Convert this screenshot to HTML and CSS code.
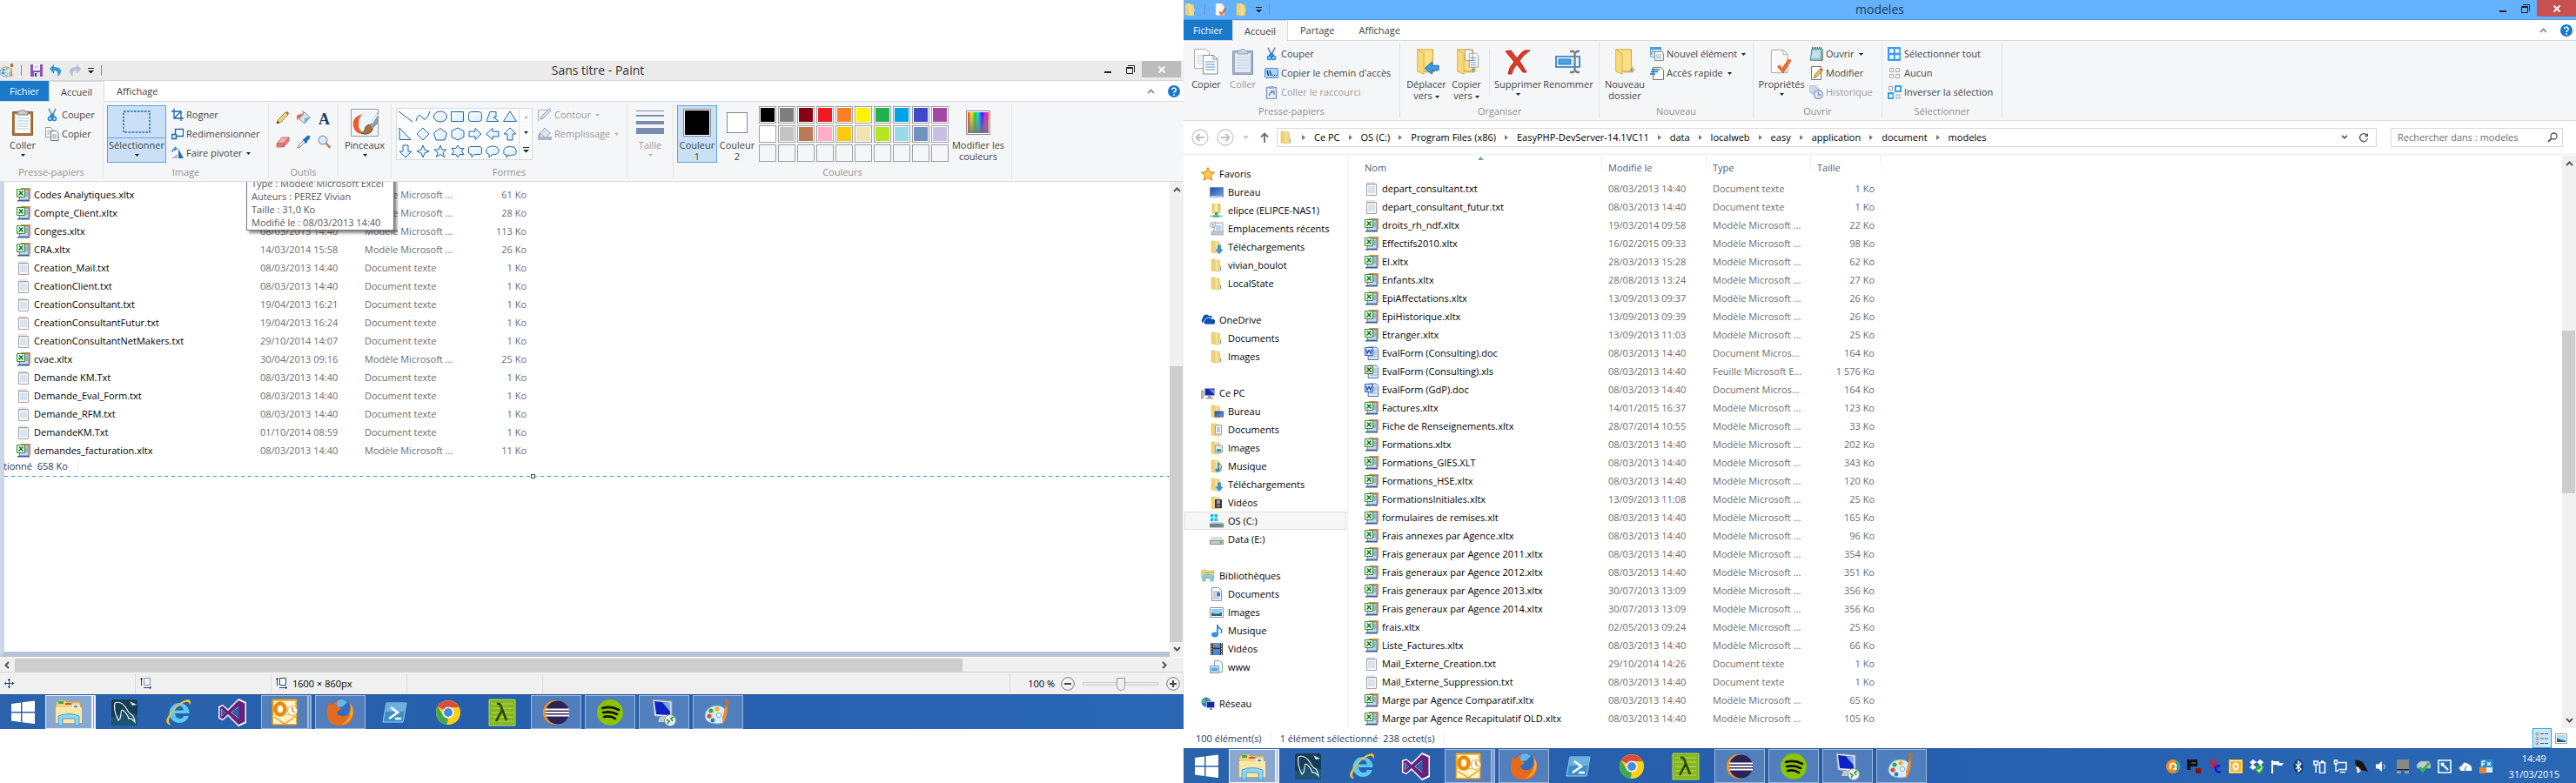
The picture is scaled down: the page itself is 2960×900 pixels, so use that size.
FILE: index.html
```html
<!DOCTYPE html>
<html lang="fr">
<head>
<meta charset="utf-8">
<title>Bureau étendu</title>
<link rel="stylesheet" href="styles.css">
<script src="app.js" defer></script>
</head>
<body>
<svg class="sprite" aria-hidden="true">
<defs>
<linearGradient id="gFold" x1="0" x2="1" y1="0" y2="0"><stop offset="0" stop-color="#e6c75c"/><stop offset=".5" stop-color="#fbeeb0"/><stop offset="1" stop-color="#e3bf4d"/></linearGradient>
<linearGradient id="gSky" x1="0" x2="1" y1="0" y2="1"><stop offset="0" stop-color="#1b4fa8"/><stop offset="1" stop-color="#6fa6e6"/></linearGradient>
<linearGradient id="gHue" x1="0" x2="1"><stop offset="0" stop-color="#f22"/><stop offset=".17" stop-color="#fe2"/><stop offset=".35" stop-color="#1d2"/><stop offset=".5" stop-color="#1df"/><stop offset=".68" stop-color="#22f"/><stop offset=".85" stop-color="#e2e"/><stop offset="1" stop-color="#f22"/></linearGradient>
<linearGradient id="gGray" x1="0" x2="0" y1="0" y2="1"><stop offset="0" stop-color="#888" stop-opacity="0"/><stop offset="1" stop-color="#777" stop-opacity=".9"/></linearGradient>
<linearGradient id="gShape" x1="0" x2="1" y1="0" y2="1"><stop offset="0" stop-color="#fff"/><stop offset="1" stop-color="#d9e9f8"/></linearGradient>
<symbol id="folder" viewBox="0 0 16 16"><path d="M2 1h5l1 1h3l1 10-1 3H7L2 14z" fill="url(#gFold)" stroke="#dcb84a" stroke-width=".6"/><path d="M2 1l5 2v12L2 14z" fill="#ecd27a"/><path d="M11 2l2 8-1 5H9" fill="#f0d675"/><path d="M12.500 10v4" stroke="#5aa7e8"/></symbol>
<symbol id="bigfolder" viewBox="0 0 32 34"><path d="M24 22l6 5-6 4H14z" fill="#bbb" opacity=".5"/><path d="M5 2h19v20l2 3v4H11z" fill="#efcb55" stroke="#d0a638"/><path d="M8 3h15v24H11z" fill="#fbe08b"/><path d="M5 2l8 5v25l-8-3z" fill="#f6d978" stroke="#d9b34a"/><path d="M24 25v4" stroke="#4b9be0" stroke-width="2"/></symbol>
<symbol id="xl" viewBox="0 0 16 16"><path d="M5 0h11v13H5z" fill="#e98b2a"/><path d="M5 2h9v12H3z" fill="#c9d8ee" stroke="#5c7aa8"/><path d="M14.500 2v12" stroke="#7f9cc9"/><path d="M9 5h4M9 7h4M9 9h4" stroke="#6c8cc0"/><path d="M1 14h14v1.500H1z" fill="#3f5f8f"/><path d="M.5 1.500h9v9h-9z" fill="#eef8ea" stroke="#2e8b3a"/><path d="M3 3.500l4.500 5M7.500 3.500l-5 5" stroke="#1d7a2c" stroke-width="1.700"/></symbol>
<symbol id="xls" viewBox="0 0 16 16"><path d="M5 1h8l2.500 2.500v12H4z" fill="#dce8f8" stroke="#5c7aa8"/><path d="M9 5h5M9 7h5M9 9h5M6 12h8" stroke="#8eabd6"/><path d="M.5 1.500h9v9h-9z" fill="#d5e8cf" stroke="#3c7a3a"/><path d="M3 3.500l4.500 5M7.500 3.500l-5 5" stroke="#2d6a2c" stroke-width="1.700"/></symbol>
<symbol id="doc" viewBox="0 0 16 16"><path d="M5 1h8l2.500 2.500v12H4z" fill="#e5effc" stroke="#4a70b4"/><path d="M9 5h5M9 7h5M9 9h5M6 12h8" stroke="#7fa1d8"/><path d="M.5 1.500h9v9h-9z" fill="#e7f0fd" stroke="#2c5fb5"/><path d="M2 3.500l1 5 2-4 2 4 1-5" stroke="#1f4fa5" stroke-width="1.300" fill="none"/></symbol>
<symbol id="txt" viewBox="0 0 16 16"><path d="M2.500 2.500h11v13h-11z" fill="#f8f9fa" stroke="#a3a3a3"/><path d="M3 .5v3M5 .5v3M7 .5v3M9 .5v3M11 .5v3" stroke="#999" stroke-dasharray="1 1"/><path d="M4 6h8M4 8h8M4 10h8M4 12h8" stroke="#b9cddc"/></symbol>
<symbol id="star" viewBox="0 0 16 16"><path d="M8 .6l2.300 5 5.300.6-4 3.600 1.200 5.400L8 12.500l-4.800 2.700 1.200-5.400-4-3.600 5.300-.6z" fill="#ffc94a" stroke="#e07818"/></symbol>
<symbol id="desk" viewBox="0 0 16 16"><path d="M.5 2.500h15v11H.5z" fill="url(#gSky)" stroke="#7b8ba8"/><path d="M1 12h14v1.500H1z" fill="#cdd6e4"/></symbol>
<symbol id="nas" viewBox="0 0 16 16"><path d="M3 0h9v11H3z" fill="url(#gFold)" stroke="#cfae4c" stroke-width=".6"/><path d="M7.500 10v3" stroke="#22a558" stroke-width="3"/><path d="M0 14.500h15" stroke="#b7bcc2" stroke-width="2"/><path d="M4 14.500h7" stroke="#22b562" stroke-width="2"/></symbol>
<symbol id="recent" viewBox="0 0 16 16"><path d="M5 1h10v12H5z" fill="#f2f5f9" stroke="#9aa3ad"/><path d="M7 5h6M7 7h6M7 9h6" stroke="#7fb0dc"/><path d="M2 11h14v4H2z" fill="#c3c8ce" stroke="#8c9299" stroke-width=".6"/><circle cx="3.500" cy="3.500" r="3" fill="#fff" stroke="#8a939c"/><path d="M3.500 2v2h1.500" stroke="#556" fill="none" stroke-width=".8"/></symbol>
<symbol id="down" viewBox="0 0 16 16"><use href="#folder"/><path d="M9.500 6h3v5h2.500l-4 4.500-4-4.500h2.500z" fill="#2f9ce8" stroke="#1b6db0" stroke-width=".6"/></symbol>
<symbol id="fdesk" viewBox="0 0 16 16"><use href="#folder"/><path d="M6 8h9.500v6H6z" fill="url(#gSky)" stroke="#556"/></symbol>
<symbol id="fdoc" viewBox="0 0 16 16"><use href="#folder"/><path d="M6.500 3h7v10h-7z" fill="#fff" stroke="#999"/><path d="M8 6h4M8 8h4M8 10h4" stroke="#5d94d4"/></symbol>
<symbol id="fimg" viewBox="0 0 16 16"><use href="#folder"/><path d="M6.500 5h8v8h-8z" fill="#d9effa" stroke="#999"/><path d="M8 9h5v3H8z" fill="#3b93b8"/></symbol>
<symbol id="fmus" viewBox="0 0 16 16"><use href="#folder"/><path d="M10 4v8" stroke="#1e7bd0" stroke-width="1.500"/><path d="M10 4q5 3 3 7" stroke="#1e7bd0" fill="none"/><ellipse cx="9" cy="12.500" rx="2.500" ry="2" fill="#2a8ee5"/></symbol>
<symbol id="fvid" viewBox="0 0 16 16"><use href="#folder"/><path d="M6 4h8v10H6z" fill="#334"/><path d="M8 5h4v4H8z" fill="#7fa6d8"/><path d="M8 10h4v3H8z" fill="#a86a5a"/></symbol>
<symbol id="cloud" viewBox="0 0 16 16"><path d="M2 11a3 3 0 0 1 0-5 4 4 0 0 1 7-3 3 3 0 0 1 4 2" fill="#0c50b0"/><path d="M5 13a3 3 0 0 1 0-5.500 4 4 0 0 1 7-1 3 3 0 0 1 2.500 6.500z" fill="#0c50b0" stroke="#fff" stroke-width=".8"/></symbol>
<symbol id="pc" viewBox="0 0 16 16"><path d="M0 5h3v9H0z" fill="#b8bec6" stroke="#7b828b" stroke-width=".5"/><path d="M4.500 2.500h11v8h-11z" fill="#1427b8" stroke="#9ba3ae"/><path d="M9 3l6 1v5z" fill="#6a8df0"/><path d="M8 11h4v2H8zM6 13h8v1.500H6z" fill="#9aa0a8"/></symbol>
<symbol id="drive" viewBox="0 0 16 16"><path d="M3 6h10l3 4H0z" fill="#e2e4e6" stroke="#999" stroke-width=".5"/><path d="M.5 9.500h15v4H.5z" fill="#c7cacd" stroke="#777" stroke-width=".8"/><path d="M12 10.500h2v2h-2z" fill="#35c13c"/></symbol>
<symbol id="osdrive" viewBox="0 0 16 16"><path d="M0 11h16v4H0z" fill="#6e8793" stroke="#556" stroke-width=".5"/><path d="M13 12h2v2h-2z" fill="#4be04f"/><path d="M1 0h3.500v3.500H1zM5.500 0H9v3.500H5.500zM1 4.500h3.500V8H1zM5.500 4.500H9V8H5.500z" fill="#11c0f2"/><path d="M2 9h12l2 2H0z" fill="#c3ccd1"/></symbol>
<symbol id="lib" viewBox="0 0 16 16"><path d="M0 3l2-2h4l1 1h8v9H1z" fill="#f3dc8c" stroke="#cdb055" stroke-width=".6"/><path d="M1 4h14" stroke="#8cc152"/><path d="M2 14V8q6-4 12 0v6h-3V9.500H5V14z" fill="#8dd2f0" stroke="#4d9cc8" stroke-width=".7"/></symbol>
<symbol id="ldoc" viewBox="0 0 16 16"><path d="M2.500.5h8l3 3v12h-11z" fill="#fff" stroke="#8b929a"/><path d="M4 5h8M4 11h8M4 13h8M4 7h3M4 9h3" stroke="#7ba2cc"/><path d="M8 6h4v4H8z" fill="#3a78c3"/></symbol>
<symbol id="limg" viewBox="0 0 16 16"><path d="M.5 2.500h15v11H.5z" fill="#fff" stroke="#8b929a"/><path d="M2 4h12v8H2z" fill="#8fd0f4"/><path d="M2 8q6 3 12 0v4H2z" fill="#1e6b7c"/></symbol>
<symbol id="lmus" viewBox="0 0 16 16"><path d="M9 1v11" stroke="#2583d6" stroke-width="1.800"/><path d="M9 1q0 3 3 4.500t1 5.500" stroke="#2583d6" fill="none" stroke-width="1.500"/><ellipse cx="6" cy="12.500" rx="4" ry="3" fill="#3495e8"/></symbol>
<symbol id="lvid" viewBox="0 0 16 16"><path d="M1 1h14v14H1z" fill="#2c3338"/><path d="M4 1h8v6H4z" fill="#5c93d8"/><path d="M4 8h8v7H4z" fill="#3c8ae2"/><path d="M5 4l4 3 2-3v3H5z" fill="#9c4b3a"/><path d="M2.500 1v14M13.500 1v14" stroke="#fff" stroke-dasharray="1.500 1.500"/></symbol>
<symbol id="www" viewBox="0 0 16 16"><path d="M5.500.5h6l3 3v10h-9z" fill="#eef5fb" stroke="#8aa3b8"/><path d="M.5 6.500h10v8H.5z" fill="#cfe6fa" stroke="#6e99c0"/><path d="M2 8.500h7v4H2z" fill="#57a3e6"/></symbol>
<symbol id="net" viewBox="0 0 16 16"><circle cx="6" cy="6" r="5.500" fill="#2b78d8"/><path d="M3 2q4 1 2 4t-4 0zM7 1l3 2-2 2z" fill="#5cc54e"/><path d="M6.500 5.500h9v7h-9z" fill="#1427b8" stroke="#b5bcc6"/><path d="M10 13h3v2h-3z" fill="#8a929c"/></symbol>

<symbol id="paint" viewBox="0 0 16 16"><path d="M7 4C2 4 0 8 0 10c0 4 4 5 7 5 4 0 5-1 4-3s1-2 2-2c0-4-3-6-6-6z" fill="#d4e9f6" stroke="#4d87b8" stroke-width=".8"/><circle cx="4" cy="7.500" r="1.400" fill="#35a83e"/><circle cx="8" cy="6.500" r="1.400" fill="#e9b51c"/><circle cx="3.500" cy="11" r="1.400" fill="#2877cf"/><circle cx="7" cy="12" r="1.500" fill="#fff" stroke="#4d87b8" stroke-width=".6"/><path d="M13 3l1.500 11-1.500 2-1-2z" fill="#f08a24"/><path d="M12 0h3v4h-3z" fill="#b5713c"/></symbol>
<symbol id="save" viewBox="0 0 14 14"><path d="M0 0h14v14H0z" fill="#8a55b8"/><path d="M3 0h8v7H3z" fill="#fff"/><path d="M4 2h6M4 4h6" stroke="#bbb"/><path d="M4 9h7v5H4z" fill="#e6dcef"/><path d="M5 10h2v4H5z" fill="#5a2d87"/></symbol>
<symbol id="undo" viewBox="0 0 14 14"><path d="M5 0v3q9 0 8 6-1 3-4 5 2-7-4-7v4L0 5z" fill="#2d97e0"/></symbol>
<symbol id="redo" viewBox="0 0 14 14"><path d="M9 0v3Q0 3 1 9q1 3 4 5-2-7 4-7v4l5-6z" fill="#b3c0d2"/></symbol>
<symbol id="qat" viewBox="0 0 7 7"><path d="M0 .5h7" stroke="#222"/><path d="M0 3h7L3.500 6.500z" fill="#222"/></symbol>
<symbol id="caret" viewBox="0 0 5 3"><path d="M0 0h5L2.500 3z" fill="currentColor"/></symbol>
<symbol id="up" viewBox="0 0 9 6"><path d="M1 5l3.500-3.500L8 5" fill="none" stroke="currentColor" stroke-width="2"/></symbol>
<symbol id="dn" viewBox="0 0 9 6"><path d="M1 1l3.500 3.500L8 1" fill="none" stroke="currentColor" stroke-width="2"/></symbol>
<symbol id="lt" viewBox="0 0 6 9"><path d="M5 1L1.500 4.500 5 8" fill="none" stroke="currentColor" stroke-width="2"/></symbol>
<symbol id="rt" viewBox="0 0 6 9"><path d="M1 1l3.500 3.500L1 8" fill="none" stroke="currentColor" stroke-width="2"/></symbol>
<symbol id="help" viewBox="0 0 14 14"><circle cx="7" cy="7" r="7" fill="#1979ca"/><path d="M4.800 5.200a2.200 2.200 0 1 1 3.400 1.900Q7 7.800 7 9" fill="none" stroke="#fff" stroke-width="1.600"/><path d="M6 10.200h2v1.600H6z" fill="#fff"/></symbol>
<symbol id="min" viewBox="0 0 10 10"><path d="M1 7h8v2H1z" fill="#222"/></symbol>
<symbol id="max" viewBox="0 0 10 10"><path d="M2 .5h7.500V8" fill="none" stroke="#222"/><path d="M.5 2.500h7v7h-7zM.5 3.500h7" fill="none" stroke="#222"/></symbol>
<symbol id="close" viewBox="0 0 10 10"><path d="M1.500 1.500l7 7M8.500 1.500l-7 7" stroke="#fff" stroke-width="1.800"/></symbol>

<symbol id="clip" viewBox="0 0 24 30"><path d="M.5 2.500h23v27H.5z" fill="#a97439" stroke="#8d5d2a"/><path d="M3 5h18v22H3z" fill="#fff"/><path d="M5 10h14M5 13h14M5 16h14M5 19h14M5 22h14" stroke="#a9c6e2"/><path d="M6 2h3q3-4 6 0h3v4H6z" fill="#c9cdd1" stroke="#777"/></symbol>
<symbol id="clipoff" viewBox="0 0 24 30"><path d="M.5 2.500h23v27H.5z" fill="#a0b1cc" stroke="#8699ba"/><path d="M3 5h18v22H3z" fill="#e2e9f3"/><path d="M5 10h14M5 13h14M5 16h14M5 19h14M5 22h14" stroke="#c6d2e4"/><path d="M6 2h3q3-4 6 0h3v4H6z" fill="#c5d0e0" stroke="#8fa1c0"/></symbol>
<symbol id="cut" viewBox="0 0 16 16"><path d="M4 1l5 10M12 1L7 11" stroke="#8395a8" stroke-width="1.800"/><path d="M8 7l-3 4M8 7l3 4" stroke="#1784d8" stroke-width="2"/><circle cx="5.500" cy="12.500" r="2" fill="none" stroke="#1784d8" stroke-width="1.600"/><circle cx="10.500" cy="12.500" r="2" fill="none" stroke="#1784d8" stroke-width="1.600"/></symbol>
<symbol id="copy" viewBox="0 0 16 16"><path d="M.5.5h6l2 2v9h-8z" fill="#fff" stroke="#999"/><path d="M2 4h4M2 6h4M2 8h4" stroke="#aac"/><path d="M6.500 4.500h6l2.500 2.500v8.500H6.500z" fill="#fff" stroke="#777"/><path d="M8 9h5M8 11h5M8 13h5" stroke="#79a"/></symbol>
<symbol id="bigcopy" viewBox="0 0 28 30"><path d="M.5.5h13l4 4v18H.5z" fill="#fff" stroke="#aaa"/><path d="M3 8h8M3 11h6M3 14h6M3 17h6" stroke="#b9c9da"/><path d="M10.500 7.500h12l4.500 4.500v17H10.500z" fill="#fff" stroke="#888"/><path d="M22 8v4h5" fill="none" stroke="#888"/><path d="M13 15h11M13 18h11M13 21h11M13 24h11" stroke="#5a8fc9"/></symbol>
<symbol id="path" viewBox="0 0 16 12"><rect x=".5" y=".5" width="15" height="11" rx="1" fill="#a9d3fb" stroke="#3b8ee0"/><path d="M3 3l1.500 6M6 3l1.500 6M9 8.500h1M11 8.500h1M13 8.500h1" stroke="#123" stroke-width="1.200"/></symbol>
<symbol id="shortcut" viewBox="0 0 16 16"><path d="M2.500 2.500h11v13h-11z" fill="#e9eef6" stroke="#8a9dbf" stroke-width="1.500"/><path d="M5 1h6v3H5z" fill="#9fb0cc"/><path d="M5.500 12q0-4 4-4M7 7h4v4" fill="none" stroke="#7388b0" stroke-width="1.500"/></symbol>
<symbol id="moveto" viewBox="0 0 32 34"><use href="#bigfolder"/><path d="M14 25l9-8v4.500h8v6h-8V32z" fill="#3a9ae6" stroke="#1d6bb3"/></symbol>
<symbol id="copyto" viewBox="0 0 32 34"><use href="#bigfolder"/><path d="M14.500 2.500h7l2 2v11h-9zM19.500 6.500h8l3 3v14h-11z" fill="#fff" stroke="#999"/><path d="M21 12h7M21 15h7M21 18h7M21 21h7" stroke="#5a8fc9"/></symbol>
<symbol id="del" viewBox="0 0 30 30"><path d="M1 3l6-1 7 9Q19 4 23 2h6Q21 7 17 14l8 13h-4l-7-9q-5 5-6 11H4q1-8 7-14z" fill="#e03a24" stroke="#b52414"/></symbol>
<symbol id="rename" viewBox="0 0 30 30"><path d="M1 9h27v12H1z" fill="#e9f4fd" stroke="#1d74c2" stroke-width="1.600"/><path d="M4 12h14v6H4z" fill="#4aa0e0" stroke="#2a7cc0"/><path d="M17 3h4l2 2 2-2h3M17 27h4l2-2 2 2h3M22.500 4v22" stroke="#7a7f85" stroke-width="2.400" fill="none"/></symbol>
<symbol id="newitem" viewBox="0 0 16 16"><path d="M.5.5h12v11H.5z" fill="#d6ebfa" stroke="#6aa7d6"/><path d="M0 0h13v3H0z" fill="#4b9fdc"/><path d="M2 9V5h4" stroke="#489" fill="none"/><path d="M5.500 5.500h8l2 2v8h-10z" fill="#fff" stroke="#888"/><path d="M7 9h6M7 11h6M7 13h6" stroke="#8bb0d6"/></symbol>
<symbol id="quick" viewBox="0 0 16 16"><path d="M3.500 1.500h9l3 3v11h-12z" fill="#fff" stroke="#777"/><path d="M2 4h9M1 6.500h8M0 9h6" stroke="#1668c4" stroke-width="1.400"/></symbol>
<symbol id="prop" viewBox="0 0 26 32"><path d="M.5 1.500h15l5 5v23H.5z" fill="#fafafa" stroke="#a5a5a5"/><path d="M15 2v5h5" fill="none" stroke="#a5a5a5"/><path d="M8 22l3-2 3 4 7-11 4 1-10 16z" fill="#ee6c32" stroke="#d45220" stroke-width=".6"/></symbol>
<symbol id="open" viewBox="0 0 16 16"><path d="M3 2h12v14H1z" fill="#89bfcb" stroke="#55909e"/><path d="M4 4h9l-1 9H2z" fill="#bfe3ea"/><path d="M3 1h12" stroke="#555" stroke-width="2" stroke-dasharray="1 1"/><path d="M15 4v12H4" stroke="#8a7340" fill="none"/></symbol>
<symbol id="edit" viewBox="0 0 16 16"><path d="M2.500.5h11v15h-11z" fill="#fff" stroke="#777"/><path d="M5 14l2-5 6-6 2 2-6 7z" fill="#f0c648" stroke="#8a6a20" stroke-width=".8"/><path d="M13 3l2 2" stroke="#d35" stroke-width="2"/></symbol>
<symbol id="hist" viewBox="0 0 16 16"><path d="M0 0h8v3h3v7H3V8H0z" fill="#cdd8e8" stroke="#aebdd4"/><circle cx="10.500" cy="10.500" r="5" fill="#dfe7f2" stroke="#8fa3c4" stroke-width="1.400"/><path d="M10.500 7v4h3" fill="none" stroke="#8094ba" stroke-width="1.300"/></symbol>
<symbol id="selall" viewBox="0 0 16 16"><path d="M0 0h15v16H0z" fill="#3d9df0"/><path d="M2.500 2.500h4v4h-4zM9 2.500h4v4H9zM2.500 9.500h4v4h-4zM9 9.500h4v4H9z" fill="#fff" stroke="#b7dbfb"/></symbol>
<symbol id="selnone" viewBox="0 0 16 16"><path d="M2.500 2.500h4v4h-4zM9.500 2.500h4v4h-4zM2.500 9.500h4v4h-4zM9.500 9.500h4v4h-4z" fill="#fff" stroke="#a3a3a3"/></symbol>
<symbol id="selinv" viewBox="0 0 16 16"><path d="M8 0h8v8H8zM0 8h7v8H0z" fill="#3d9df0"/><path d="M10 2h4v4h-4zM2 10.500h3.500v3.500H2z" fill="#fff"/><path d="M1.500 1.500h4v4h-4zM10 11h4v4h-4z" fill="#fff" stroke="#a3a3a3"/></symbol>

<symbol id="selrect" viewBox="0 0 32 26"><path d="M1 1h30v24H1z" fill="none" stroke="#1a63ad" stroke-width="1.400" stroke-dasharray="2.500 1.500"/></symbol>
<symbol id="crop" viewBox="0 0 14 14"><path d="M3 0v11h11M0 3h11v11M4 10l7-7" fill="none" stroke="#1d66ad" stroke-width="1.300"/></symbol>
<symbol id="resize" viewBox="0 0 14 14"><path d="M4.500 1.500h9v8h-9z" fill="#fff" stroke="#1d66ad" stroke-width="1.400"/><path d="M.5 7.500h5v5h-5z" fill="#d6e8f8" stroke="#1d66ad" stroke-width="1.400"/></symbol>
<symbol id="rotate" viewBox="0 0 14 14"><path d="M0 13l7-5v5z" fill="#b5bcc4"/><path d="M8 2l6 11H8z" fill="#1f6fb5"/><path d="M1 6q0-4 4-4M3.500 0L6 2 3.500 4" fill="none" stroke="#2a8be0" stroke-width="1.400"/></symbol>
<symbol id="pencil" viewBox="0 0 16 16"><path d="M1 15l1-4 9-9 3 3-9 9z" fill="#f0d080" stroke="#8a6a30" stroke-width=".7"/><path d="M11 2l2-1 2 2-1 2z" fill="#d4504a"/><path d="M1 15l1-3 2 2z" fill="#222"/></symbol>
<symbol id="bucket" viewBox="0 0 16 16"><path d="M4 7l5-5 6 6-6 7-6-5z" fill="#d5e4f0" stroke="#557ea0" stroke-width=".8"/><path d="M9 9l6-1-6 7z" fill="#7ea8c8"/><path d="M6 4L1 5q-2 3-1 7 2-4 6-5z" fill="#ea6a30"/><path d="M7 6V0" stroke="#888"/></symbol>
<symbol id="eraser" viewBox="0 0 16 16"><path d="M1 10l6-7h8l-6 7z" fill="#f6b0ac" stroke="#c25b58" stroke-width=".8"/><path d="M1 10h8v4H1zM9 10l6-7v4l-6 7z" fill="#e07f7b" stroke="#c25b58" stroke-width=".8"/></symbol>
<symbol id="dropper" viewBox="0 0 16 16"><path d="M1 15l1-3 6-6 2 2-6 6z" fill="#dfe8f0" stroke="#777" stroke-width=".8"/><path d="M7 5l2-1 3-3q4-1 3 3l-3 3v2l-2 1z" fill="#1e73c0"/></symbol>
<symbol id="zoom" viewBox="0 0 16 16"><path d="M9 9l5.500 6" stroke="#b07b45" stroke-width="2.400"/><circle cx="6" cy="6" r="4.800" fill="#dcecf8" stroke="#9aa7b5" stroke-width="1.500"/></symbol>
<symbol id="brush" viewBox="0 0 32 32"><path d="M.5.5h31v31H.5z" fill="#eef6f7" stroke="#999"/><path d="M14 6Q1 9 3 20q2 10 14 9-9-4-8-11Q9 9 14 6z" fill="#f0592a"/><path d="M12 28q4-1 5-7 3-4 7-2 3 3 0 7-5 5-12 2z" fill="#a3743f" stroke="#6d4a22"/><path d="M22 18L31 4v13l-6 6z" fill="#8e9bae"/><path d="M24 17l7-11" stroke="#e5ebf2" stroke-width="2"/></symbol>
<symbol id="outline" viewBox="0 0 16 16"><path d="M.5 15V2.500h13" fill="none" stroke="#9fb0c8"/><path d="M3 13l1-3 9-9 2 2-9 9z" fill="#dce4ee" stroke="#8398b8"/></symbol>
<symbol id="fill" viewBox="0 0 16 16"><path d="M0 11h16v4H0z" fill="#a9b8cf"/><path d="M3 7l5-6 6 6-5 6z" fill="#dfe6f0" stroke="#8fa2c0"/><path d="M3 7l-2 4" stroke="#8fa2c0" stroke-width="2"/></symbol>
<symbol id="size" viewBox="0 0 32 28"><path d="M0 0h32v1H0zM0 5h32v2H0zM0 12h32v4H0zM0 20h32v7H0z" fill="#788db0"/></symbol>
<symbol id="hue" viewBox="0 0 30 30"><path d="M1.500 1.500h27v27h-27z" fill="#fff" stroke="#888"/><path d="M3 3h24v24H3z" fill="url(#gHue)"/><path d="M3 3h24v24H3z" fill="url(#gGray)"/></symbol>
<symbol id="s0" viewBox="0 0 18 16"><path d="M1 2l16 12"/></symbol>
<symbol id="s1" viewBox="0 0 18 16"><path d="M1 13Q4 2 8 9t9-7" fill="none"/></symbol>
<symbol id="s2" viewBox="0 0 18 16"><ellipse cx="9" cy="8" rx="7.500" ry="6"/></symbol>
<symbol id="s3" viewBox="0 0 18 16"><path d="M1.500 2.500h14v11h-14z"/></symbol>
<symbol id="s4" viewBox="0 0 18 16"><rect x="1.500" y="2.500" width="15" height="11" rx="3"/></symbol>
<symbol id="s5" viewBox="0 0 18 16"><path d="M2 13.500L6 2.500h7v6h-3l6 5z"/></symbol>
<symbol id="s6" viewBox="0 0 18 16"><path d="M9 2l7.500 11.500h-15z"/></symbol>
<symbol id="s7" viewBox="0 0 18 16"><path d="M2 1v13.500h13z"/></symbol>
<symbol id="s8" viewBox="0 0 18 16"><path d="M9 1l7 7-7 7-7-7z"/></symbol>
<symbol id="s9" viewBox="0 0 18 16"><path d="M9 1.500L16.500 7 14 15H4L1.500 7z"/></symbol>
<symbol id="s10" viewBox="0 0 18 16"><path d="M9 1l7 3.500v7L9 15l-7-3.500v-7z"/></symbol>
<symbol id="s11" viewBox="0 0 18 16"><path d="M2 5h7V1.500L16 8l-7 6.500V11H2z"/></symbol>
<symbol id="s12" viewBox="0 0 18 16"><path d="M16 5H9V1.500L2 8l7 6.500V11h7z"/></symbol>
<symbol id="s13" viewBox="0 0 18 16"><path d="M6 15V8H2l7-7 7 7h-4v7z"/></symbol>
<symbol id="s14" viewBox="0 0 18 16"><path d="M6 1v7H2l7 7 7-7h-4V1z"/></symbol>
<symbol id="s15" viewBox="0 0 18 16"><path d="M9 1l2 5 5 2-5 2-2 5-2-5-5-2 5-2z"/></symbol>
<symbol id="s16" viewBox="0 0 18 16"><path d="M9 1l2 5h5l-4 3.500 1.500 5L9 11.500 4.500 14.500 6 9.500 2 6h5z"/></symbol>
<symbol id="s17" viewBox="0 0 18 16"><path d="M9 1l2.200 3.500H16L13.500 8l2.500 3.500h-4.800L9 15l-2.200-3.500H2L4.500 8 2 4.500h4.800z"/></symbol>
<symbol id="s18" viewBox="0 0 18 16"><path d="M3 2.500h12l1.500 1.500v6L15 11.500H8L5 15v-3.500H3L1.500 10V4z"/></symbol>
<symbol id="s19" viewBox="0 0 18 16"><path d="M5 15v-3.500Q1 10 1.500 7 3 2 9 2t7.500 5Q16 12 8 12z"/></symbol>
<symbol id="s20" viewBox="0 0 18 16"><path d="M5 15v-3Q1 12 2 9q-1-3 1-4 1-3 4-2 2-2 4 0 4-1 4 2 2 2 1 4 0 4-4 3-2 2-5 0z"/></symbol>

<symbol id="cross" viewBox="0 0 11 11"><path d="M5.500 0v11M0 5.500h11M4 2l1.500-1.500L7 2M4 9l1.500 1.500L7 9M2 4L.5 5.500 2 7M9 4l1.500 1.500L9 7" fill="none" stroke="#24426f"/></symbol>
<symbol id="selsize" viewBox="0 0 13 13"><path d="M4.500.5h7v8h-7z" fill="none" stroke="#24426f" stroke-dasharray="1 1"/><path d="M1.500 0v9M0 2l1.500-1.500L3 2M4 11.500h9M11 10l1.500 1.500L11 13" fill="none" stroke="#24426f"/></symbol>
<symbol id="imgsize" viewBox="0 0 13 13"><path d="M4.500.5h7v8h-7z" fill="#fff" stroke="#24426f"/><path d="M1.500 0v9M0 2l1.500-1.500L3 2M4 11.500h9M11 10l1.500 1.500L11 13" fill="none" stroke="#24426f"/></symbol>
<symbol id="zminus" viewBox="0 0 16 16"><circle cx="8" cy="8" r="7.300" fill="#f4f4f4" stroke="#777"/><path d="M4 8h8" stroke="#444" stroke-width="2"/></symbol>
<symbol id="zplus" viewBox="0 0 16 16"><circle cx="8" cy="8" r="7.300" fill="#f4f4f4" stroke="#777"/><path d="M4 8h8M8 4v8" stroke="#444" stroke-width="2"/></symbol>

<symbol id="back" viewBox="0 0 20 20"><circle cx="10" cy="10" r="9" fill="none" stroke="#c9c9c9" stroke-width="1.300"/><path d="M15 10H6M9.500 6l-4 4 4 4" fill="none" stroke="#c0c0c0" stroke-width="2"/></symbol>
<symbol id="fwd" viewBox="0 0 20 20"><circle cx="10" cy="10" r="9" fill="none" stroke="#c9c9c9" stroke-width="1.300"/><path d="M5 10h9M10.500 6l4 4-4 4" fill="none" stroke="#c0c0c0" stroke-width="2"/></symbol>
<symbol id="uparr" viewBox="0 0 10 12"><path d="M5 12V2M1 5.500l4-4 4 4" fill="none" stroke="#6b6b6b" stroke-width="1.800"/></symbol>
<symbol id="refresh" viewBox="0 0 12 12"><path d="M10 4a4.500 4.500 0 1 0 .5 3" fill="none" stroke="#555" stroke-width="1.300"/><path d="M11 1v4H7z" fill="#555"/></symbol>
<symbol id="loupe" viewBox="0 0 12 12"><circle cx="7.500" cy="4.500" r="3.500" fill="none" stroke="#555" stroke-width="1.300"/><path d="M5 7l-4 4" stroke="#555" stroke-width="1.800"/></symbol>
<symbol id="vlist" viewBox="0 0 16 16"><path d="M1 1h3v3H1zM1 6.500h3v3H1zM1 12h3v3H1z" fill="#fff" stroke="#888" stroke-width=".8"/><path d="M2 2h1v1H2zM2 13h1v1H2z" fill="#27c"/><path d="M2 7.500h1v1H2z" fill="#d22"/><path d="M6 2.500h4M11 2.500h4M6 8h4M11 8h4M6 13.500h4M11 13.500h4" stroke="#456"/></symbol>
<symbol id="vimg" viewBox="0 0 14 12"><path d="M.5.5h13v11H.5z" fill="#fff" stroke="#99a"/><path d="M2 2h10v8H2z" fill="#a8daf4"/><path d="M2 5q5 4 10 3v2H2z" fill="#235c74"/></symbol>

<symbol id="t-win" viewBox="0 0 32 32"><path d="M3 6l11-1.500V15H3zM15.500 4.300L30 2.500V15H15.500zM3 16.500h11V27L3 25.500zM15.500 16.500H30V29l-14.500-1.800z" fill="#fff"/></symbol>
<symbol id="t-explorer" viewBox="0 0 32 32"><path d="M1 6l3-4h8l2 2h15l2 24H1z" fill="#efd27c" stroke="#c9a546"/><path d="M4 3h6v3H4z" fill="#2fae52"/><path d="M12 5h7v2h-7z" fill="#d94a3b"/><path d="M20 7h8v3h-8z" fill="#fff"/><path d="M22 8h4v2h-4z" fill="#2a8be0"/><path d="M1 10h30v18H1z" fill="#fae9a6"/><path d="M4 31V20q12-5 24 0v11h-5v-8H9v8z" fill="#8fd6f2" stroke="#4d9cc8"/></symbol>
<symbol id="t-mysql" viewBox="0 0 32 32"><rect x="1" y="1" width="30" height="30" rx="3" fill="#153d56"/><path d="M1 22q15-8 30-3v9q0 3-3 3H4q-3 0-3-3z" fill="#1f5470"/><path d="M9 25Q3 13 5 5q7-3 13 6 3 6 7 8 2 2 3 8-4-5-7-4-2-6-6-9-3-3-3 4l-1 5z" fill="none" stroke="#e8f2f6" stroke-width="1.200"/><path d="M22 3l3 5 5-1-4-2z" fill="#dfeaf0"/></symbol>
<symbol id="t-ie" viewBox="0 0 32 32"><path d="M28 20q-3 8-11 8A11.500 11.500 0 1 1 28.500 17H12q1 6 6 6 3 0 4-3zM12 13.500h10q-1-5-5-5t-5 5z" fill="#5cc8f4"/><path d="M5 30Q-2 27 8 15 17 3 26 1q6 0 3 7 0-5-5-4-7 2-14 11-8 11-3 15z" fill="#f5c32c"/></symbol>
<symbol id="t-vs" viewBox="0 0 32 32"><path d="M0 9l5-2 6 5L23 0l9 4v24l-9 4-12-12-6 5-5-2zM4 12v8l4-4zM15 16l9 7V9z" fill="#fff"/><path d="M1.500 10L5 8.500l6 5.500L23 2l7.500 3.500v21L23 30 11 18l-6 5.500L1.500 22zM3.500 11.500v9L8 16zM14.500 16l9 7V9z" fill="#68217a" fill-rule="evenodd"/></symbol>
<symbol id="t-outlook" viewBox="0 0 32 32"><path d="M2 1h28v29H2z" fill="#f7c33a" stroke="#e08f12"/><path d="M4 3h24v15H4z" fill="#fff6da"/><path d="M3 19h26v10H3z" fill="#fff2c4"/><path d="M4 21l12 8 13-9" fill="none" stroke="#e8a020" stroke-width="1.500"/><ellipse cx="11" cy="12" rx="5.500" ry="6.500" fill="none" stroke="#e68a10" stroke-width="4.500"/><circle cx="25" cy="14" r="5.500" fill="#fff" stroke="#e9a33a"/><path d="M25 10v4l3 2" fill="none" stroke="#d67a10" stroke-width="1.400"/></symbol>
<symbol id="t-firefox" viewBox="0 0 32 32"><circle cx="17" cy="14" r="13" fill="#2a6fc4"/><path d="M10 4q7-6 14 0l-5 5-6 1z" fill="#65b8ec"/><path d="M3 5q2 2 3 2 4-4 8-4-4 4-2 6l5 2q-1 3-5 4 1 6 8 5 7-1 7-8 1-5-2-9 6 5 6 13 0 15-15 15Q1 31 1 17 1 10 3 5z" fill="#e66a1e"/><path d="M28 6q4 6 2 13-4 10-13 11 8-4 10-11 2-6 1-13z" fill="#f9b233"/></symbol>
<symbol id="t-ps" viewBox="0 0 32 32"><path d="M7 5h23l-4 22H3z" fill="#3b8fc9" stroke="#9fd0ee"/><path d="M8 6h21l-2 9H6z" fill="#6bb3de"/><path d="M12 10l8 6-10 7M17 23h7" fill="none" stroke="#fff" stroke-width="2.600"/></symbol>
<symbol id="t-chrome" viewBox="0 0 32 32"><circle cx="16" cy="16" r="14" fill="#fcd116"/><path d="M16 16L3.900 9A14 14 0 0 1 28.500 10H16z" fill="#dd4b3e"/><path d="M4 9l7 12 5 2-1.500 7A14 14 0 0 1 4 9z" fill="#3fa654"/><circle cx="16" cy="16" r="6.500" fill="#fff"/><circle cx="16" cy="16" r="5" fill="#4688e8"/></symbol>
<symbol id="t-lambda" viewBox="0 0 32 32"><path d="M1 1h30v30H1z" fill="#86b81b" stroke="#b3d65c"/><path d="M4 6h24M4 11h24M4 16h24M4 21h24M4 26h24" stroke="#b5d66a"/><path d="M10 6q4-1 5 4l6 15M16 13L9 26" fill="none" stroke="#2f4010" stroke-width="2.600"/></symbol>
<symbol id="t-eclipse" viewBox="0 0 32 32"><circle cx="15" cy="16" r="14" fill="#f39324"/><circle cx="17.500" cy="16" r="13.500" fill="#2c2255"/><path d="M4 12.500h27M4 16h27M4 19.500h27" stroke="#fff" stroke-width="2"/></symbol>
<symbol id="t-spotify" viewBox="0 0 32 32"><circle cx="16" cy="16" r="15" fill="#8bc400"/><path d="M7 11q10-3 19 2M8 16q9-2 16 2M9 21q7-2 13 2" fill="none" stroke="#111" stroke-width="2.600" stroke-linecap="round"/></symbol>
<symbol id="t-rdp" viewBox="0 0 32 32"><path d="M3 1l22 2v19L5 20z" fill="#dfe5ec" stroke="#8b95a3"/><path d="M5 3l18 2v14L7 18z" fill="#0d22c4"/><path d="M14 4l9 1v10z" fill="#7ea6f4"/><path d="M11 21h6l2 6H9z" fill="#c2c8cf"/><circle cx="23" cy="25" r="6.500" fill="#f0f0f0" stroke="#8d969e"/><path d="M19 24l3 2-2 3M27 21l-3 2 2 3" fill="none" stroke="#2fa045" stroke-width="1.700"/></symbol>
<symbol id="t-paint" viewBox="0 0 32 32"><path d="M15 8C5 8 1 15 1 20c0 7 8 9 14 9 8 0 9-3 7-6s2-4 4-4c1-7-5-11-11-11z" fill="#d9ecf7" stroke="#6da3cc"/><circle cx="8" cy="14" r="2.600" fill="#35a83e"/><circle cx="15" cy="12" r="2.600" fill="#e9b51c"/><circle cx="6" cy="20" r="2.600" fill="#d94e3b"/><circle cx="10" cy="25" r="2.400" fill="#2877cf"/><circle cx="17" cy="19" r="2.600" fill="#fff" stroke="#6da3cc"/><path d="M25 8l2 0q0 14-6 22 0-12 4-22z" fill="#f08a24"/><path d="M24 1q4-2 5 3l-2 5-3-1z" fill="#b5713c"/></symbol>

<symbol id="y0" viewBox="0 0 16 16"><circle cx="8" cy="8" r="8" fill="#f58a1f"/><path d="M11 1q5 3 4 8-1 4-4 6z" fill="#1aa5a0"/><path d="M5 11V6q3-3 6 0v5H8" fill="none" stroke="#fff" stroke-width="2"/></symbol>
<symbol id="y1" viewBox="0 0 16 16"><path d="M0 0h12v8H4v4H0z" fill="#111"/><path d="M5 4h5" stroke="#68a"/><path d="M10 10h6v6h-6z" fill="#8a0d12"/></symbol>
<symbol id="y2" viewBox="0 0 16 16"><path d="M10 1Q3-1 4 3t5 3q2 4-5 3" fill="none" stroke="#f01020" stroke-width="2.400"/><path d="M14 8q-6-2-5 3t6 3" fill="none" stroke="#0a12f0" stroke-width="2.400"/></symbol>
<symbol id="y3" viewBox="0 0 16 16"><path d="M0 0h16v16H0z" fill="#f7b52a"/><path d="M1.500 1.500h13v13h-13z" fill="none" stroke="#fff3c8"/><ellipse cx="8" cy="8" rx="2.500" ry="3.500" fill="none" stroke="#fff" stroke-width="2"/></symbol>
<symbol id="y4" viewBox="0 0 16 16"><path d="M4 0l4 3 4-3 4 3-3 3 3 3-4 3-4-3-4 3-4-3 3-3-3-3zM4 6l4 3 4-3-4-3z" fill="#fff" fill-rule="evenodd"/><circle cx="11" cy="11.500" r="4.500" fill="#27a344"/><path d="M9 11.500l2 2 3-4" fill="none" stroke="#fff" stroke-width="1.500"/></symbol>
<symbol id="y5" viewBox="0 0 16 16"><path d="M2 1v15" stroke="#fff" stroke-width="2"/><path d="M3 2h7v2h5l-2 3H8V6H3z" fill="#fff"/></symbol>
<symbol id="y6" viewBox="0 0 16 16"><ellipse cx="8" cy="8" rx="5.500" ry="8" fill="#103c78"/><path d="M5 5l6 6-3 3V2l3 3-6 6" fill="none" stroke="#fff" stroke-width="1.300"/></symbol>
<symbol id="y7" viewBox="0 0 16 16"><path d="M8.500 3.500h6v12h-6zM10 2h3" fill="none" stroke="#fff" stroke-width="1.600"/><path d="M1 2h6M2 2v4h4V2M4 6v9" fill="none" stroke="#fff" stroke-width="1.500"/></symbol>
<symbol id="y8" viewBox="0 0 16 16"><path d="M6 3.500h9v8H6M8 14.500h6M3 5v8h3M1.500 1h3v4h-3z" fill="none" stroke="#fff" stroke-width="1.500"/></symbol>
<symbol id="y9" viewBox="0 0 16 16"><path d="M1 1q8-2 12 7l3 6-8-2-5 2z" fill="#151515"/><path d="M2 8q4 0 6 5l-4 3z" fill="#eee"/><path d="M5 10h2v3" stroke="#c33" fill="none"/></symbol>
<symbol id="y10" viewBox="0 0 16 16"><path d="M1 5.500h3L8 2v12l-4-3.500H1z" fill="#fff"/><path d="M10 5q3 3 0 6" fill="none" stroke="#cfe0f4"/></symbol>
<symbol id="y11" viewBox="0 0 16 16"><path d="M1 0h14v11H1z" fill="#888"/><path d="M1 13h5v3H1zM10 13h5v3h-5z" fill="#999"/><path d="M1 11.500h14" stroke="#222"/></symbol>
<symbol id="y12" viewBox="0 0 16 16"><path d="M0 6l4-4h10l2 4v4H0z" fill="#c5cbd1" stroke="#888" stroke-width=".6"/><path d="M3 9l4 4 7-9" fill="none" stroke="#2fb94a" stroke-width="3"/></symbol>
<symbol id="y13" viewBox="0 0 16 16"><path d="M1 1h14v14H1z" fill="#1d6fb8" stroke="#fff" stroke-width="1.600"/><path d="M4 4l8 8M4 7l3-3" stroke="#fff" stroke-width="2.200"/></symbol>
<symbol id="y14" viewBox="0 0 16 16"><path d="M3 13q-5-4 1-6 2-6 7-2 5 2 4 8z" fill="#fff"/><path d="M8 13q-2-4 2-5" stroke="#2862ae" fill="none"/></symbol>
<symbol id="y15" viewBox="0 0 16 16"><path d="M1 0h15v14H1z" fill="#1e8ad6"/><path d="M3 2h4M3 5h3M3 2v6M9 3l4 4M13 3L9 7" stroke="#fff" fill="none" stroke-width="1.300"/><path d="M0 9h8v7H0z" fill="#e8862c"/><path d="M8 9h7v6H8z" fill="#d9eefb"/></symbol>
</defs>
</svg>

<main class="desktop">
<section class="screen screen-left" aria-label="Écran secondaire">
  <header class="titlebar">
    <div class="qat">
      <svg class="i16"><use href="#paint"/></svg><span class="bar"></span>
      <button aria-label="Enregistrer"><svg class="i14"><use href="#save"/></svg></button>
      <button aria-label="Annuler"><svg class="i14"><use href="#undo"/></svg></button>
      <button aria-label="Rétablir"><svg class="i14"><use href="#redo"/></svg></button>
      <button aria-label="Personnaliser"><svg class="i7"><use href="#qat"/></svg></button><span class="bar"></span>
    </div>
    <h1>Sans titre - Paint</h1>
    <div class="winbtns"><button aria-label="Réduire"><svg class="i10"><use href="#min"/></svg></button><button aria-label="Restaurer"><svg class="i10"><use href="#max"/></svg></button><button class="x" aria-label="Fermer"><svg class="i10"><use href="#close"/></svg></button></div>
  </header>
  <nav class="tabs"><button class="file">Fichier</button><button class="on">Accueil</button><button>Affichage</button><span class="grow"></span><button class="ico" aria-label="Réduire le ruban"><svg class="chev"><use href="#up"/></svg></button><button class="ico" aria-label="Aide"><svg class="i14"><use href="#help"/></svg></button></nav>
  <div class="ribbon">
    <div class="group w119"><div class="body">
      <button class="big w52"><span class="pic"><svg class="clip"><use href="#clip"/></svg></span>Coller<svg class="caret"><use href="#caret"/></svg></button>
      <div class="col"><button class="sm"><svg class="i16"><use href="#cut"/></svg>Couper</button><button class="sm"><svg class="i16"><use href="#copy"/></svg>Copier</button></div>
    </div><p>Presse-papiers</p></div>
    <div class="group w190"><div class="body pad4">
      <button class="big sel split w68"><span class="pic"><svg class="selrect"><use href="#selrect"/></svg></span>Sélectionner<svg class="caret"><use href="#caret"/></svg></button>
      <div class="col pad6"><button class="sm"><svg class="i14"><use href="#crop"/></svg>Rogner</button><button class="sm"><svg class="i14"><use href="#resize"/></svg>Redimensionner</button><button class="sm"><svg class="i14"><use href="#rotate"/></svg>Faire pivoter<svg class="caret"><use href="#caret"/></svg></button></div>
    </div><p>Image</p></div>
    <div class="group w80"><div class="body tools">
      <button aria-label="Crayon"><svg class="i16"><use href="#pencil"/></svg></button><button aria-label="Remplir"><svg class="i16"><use href="#bucket"/></svg></button><button class="letter">A</button>
      <button aria-label="Gomme"><svg class="i16"><use href="#eraser"/></svg></button><button aria-label="Pipette"><svg class="i16"><use href="#dropper"/></svg></button><button aria-label="Loupe"><svg class="i16"><use href="#zoom"/></svg></button>
    </div><p>Outils</p></div>
    <div class="group w61"><div class="body"><button class="big w60"><span class="pic"><svg class="i32"><use href="#brush"/></svg></span>Pinceaux<svg class="caret"><use href="#caret"/></svg></button></div></div>
    <div class="group w271"><div class="body pad5">
      <div class="shapes"><div class="shape-grid" id="shapes"></div><div class="shape-scroll"><svg class="caret flip"><use href="#caret"/></svg><svg class="caret"><use href="#caret"/></svg><svg class="i7"><use href="#qat"/></svg></div></div>
      <div class="col pad6"><button class="sm" disabled><svg class="i16"><use href="#outline"/></svg>Contour<svg class="caret"><use href="#caret"/></svg></button><button class="sm" disabled><svg class="i16"><use href="#fill"/></svg>Remplissage<svg class="caret"><use href="#caret"/></svg></button></div>
    </div><p>Formes</p></div>
    <div class="group w53"><div class="body"><button class="big w52" disabled><span class="pic"><svg class="size"><use href="#size"/></svg></span>Taille<svg class="caret"><use href="#caret"/></svg></button></div></div>
    <div class="group w389"><div class="body pad4">
      <button class="big sel w46"><span class="pic"><i class="c1"></i></span>Couleur<br>1</button>
      <button class="big w46"><span class="pic"><i class="c2"></i></span>Couleur<br>2</button>
      <div class="palette" id="palette"></div>
      <button class="big w68"><span class="pic"><svg class="i30"><use href="#hue"/></svg></span>Modifier les<br>couleurs</button>
    </div><p>Couleurs</p></div>
  </div>
  <div class="workspace">
    <div class="canvas">
      <div class="picture">
        <table class="files" id="left-files"><colgroup><col class="c-name-l"><col class="c-date"><col class="c-type"><col class="c-size"></colgroup><tbody></tbody></table>
        <div class="tip">Type : Modèle Microsoft Excel<br>Auteurs : PEREZ Vivian<br>Taille : 31,0 Ko<br>Modifié le : 08/03/2013 14:40</div>
        <p class="cut-status"><span>tionné&nbsp; 658 Ko</span></p>
        <span class="handle"></span>
      </div>
    </div>
    <div class="vscroll"><svg class="chev"><use href="#up"/></svg><div class="track"><div class="thumb t-left"></div></div><svg class="chev"><use href="#dn"/></svg></div>
  </div>
  <div class="hscroll"><svg class="chevh"><use href="#lt"/></svg><div class="track"><div class="thumb"></div></div><svg class="chevh"><use href="#rt"/></svg></div>
  <footer class="pstatus">
    <span class="cell"><svg class="i11"><use href="#cross"/></svg></span><span class="cell"><svg class="i13"><use href="#selsize"/></svg></span><span class="cell"><svg class="i13"><use href="#imgsize"/></svg>1600 × 860px</span><span class="cell"></span><span class="cell last"></span>
    <div class="zoom"><label for="zoom-range">100 %</label><button aria-label="Zoom arrière"><svg class="i16"><use href="#zminus"/></svg></button><input type="range" id="zoom-range" min="0" max="100" value="50"><button aria-label="Zoom avant"><svg class="i16"><use href="#zplus"/></svg></button></div>
  </footer>
  <div class="taskbar"></div>
</section>

<section class="screen screen-right" aria-label="Écran principal">
  <header class="titlebar blue">
    <div class="qat">
      <svg class="i16"><use href="#folder"/></svg><span class="bar"></span>
      <button aria-label="Propriétés"><svg class="i16"><use href="#prop"/></svg></button>
      <button aria-label="Nouveau dossier"><svg class="i16"><use href="#folder"/></svg></button>
      <button aria-label="Personnaliser"><svg class="i7"><use href="#qat"/></svg></button><span class="bar"></span>
    </div>
    <h1>modeles</h1>
    <div class="winbtns"><button aria-label="Réduire"><svg class="i10"><use href="#min"/></svg></button><button aria-label="Restaurer"><svg class="i10"><use href="#max"/></svg></button><button class="x" aria-label="Fermer"><svg class="i10"><use href="#close"/></svg></button></div>
  </header>
  <nav class="tabs"><button class="file">Fichier</button><button class="on">Accueil</button><button>Partage</button><button>Affichage</button><span class="grow"></span><button class="ico" aria-label="Réduire le ruban"><svg class="chev"><use href="#up"/></svg></button><button class="ico" aria-label="Aide"><svg class="i14"><use href="#help"/></svg></button></nav>
  <div class="ribbon">
    <div class="group w249"><div class="body pad5">
      <button class="big w42"><span class="pic"><svg class="bigcopy"><use href="#bigcopy"/></svg></span>Copier</button>
      <button class="big w42" disabled><span class="pic"><svg class="clip"><use href="#clipoff"/></svg></span>Coller</button>
      <div class="col pad4"><button class="sm"><svg class="i16"><use href="#cut"/></svg>Couper</button><button class="sm"><svg class="i16"><use href="#path"/></svg>Copier le chemin d'accès</button><button class="sm" disabled><svg class="i16"><use href="#shortcut"/></svg>Coller le raccourci</button></div>
    </div><p>Presse-papiers</p></div>
    <div class="group w229"><div class="body pad5">
      <button class="big w50"><span class="pic"><svg class="i32"><use href="#moveto"/></svg></span>Déplacer<br>vers <svg class="caret"><use href="#caret"/></svg></button>
      <button class="big w42"><span class="pic"><svg class="i32"><use href="#copyto"/></svg></span>Copier<br>vers <svg class="caret"><use href="#caret"/></svg></button>
      <span class="vsep"></span>
      <button class="big w56"><span class="pic"><svg class="i30"><use href="#del"/></svg></span>Supprimer<svg class="caret"><use href="#caret"/></svg></button>
      <button class="big w60"><span class="pic"><svg class="i30"><use href="#rename"/></svg></span>Renommer</button>
    </div><p>Organiser</p></div>
    <div class="group w177"><div class="body pad4">
      <button class="big w50"><span class="pic"><svg class="i32"><use href="#bigfolder"/></svg></span>Nouveau<br>dossier</button>
      <div class="col pad4"><button class="sm"><svg class="i16"><use href="#newitem"/></svg>Nouvel élément<svg class="caret"><use href="#caret"/></svg></button><button class="sm"><svg class="i16"><use href="#quick"/></svg>Accès rapide<svg class="caret"><use href="#caret"/></svg></button></div>
    </div><p>Nouveau</p></div>
    <div class="group w148"><div class="body pad4">
      <button class="big w56"><span class="pic"><svg class="i30"><use href="#prop"/></svg></span>Propriétés<svg class="caret"><use href="#caret"/></svg></button>
      <div class="col pad4"><button class="sm"><svg class="i16"><use href="#open"/></svg>Ouvrir<svg class="caret"><use href="#caret"/></svg></button><button class="sm"><svg class="i16"><use href="#edit"/></svg>Modifier</button><button class="sm" disabled><svg class="i16"><use href="#hist"/></svg>Historique</button></div>
    </div><p>Ouvrir</p></div>
    <div class="group w138"><div class="body pad6">
      <div class="col"><button class="sm"><svg class="i16"><use href="#selall"/></svg>Sélectionner tout</button><button class="sm"><svg class="i16"><use href="#selnone"/></svg>Aucun</button><button class="sm"><svg class="i16"><use href="#selinv"/></svg>Inverser la sélection</button></div>
    </div><p>Sélectionner</p></div>
  </div>
  <div class="navrow">
    <button aria-label="Précédent"><svg class="i20"><use href="#back"/></svg></button><button aria-label="Suivant"><svg class="i20"><use href="#fwd"/></svg></button><button class="pale" aria-label="Récents"><svg class="caret"><use href="#caret"/></svg></button><button aria-label="Dossier parent"><svg class="uparr"><use href="#uparr"/></svg></button>
    <div class="address"><svg class="i16"><use href="#folder"/></svg><ol id="crumbs"></ol><button aria-label="Historique"><svg class="chev"><use href="#dn"/></svg></button><button aria-label="Actualiser"><svg class="i12"><use href="#refresh"/></svg></button></div>
    <div class="search"><input type="search" aria-label="Rechercher" placeholder="Rechercher dans : modeles"><svg class="i12"><use href="#loupe"/></svg></div>
  </div>
  <div class="explorer">
    <nav class="tree" id="tree"></nav>
    <div class="listing">
      <table class="files" id="right-files"><colgroup><col class="c-name-r"><col class="c-date"><col class="c-type"><col class="c-size"></colgroup><thead><tr><th>Nom<svg class="sort"><use href="#caret"/></svg></th><th>Modifié le</th><th>Type</th><th>Taille</th></tr></thead><tbody></tbody></table>
    </div>
    <div class="vscroll"><svg class="chev"><use href="#up"/></svg><div class="track"><div class="thumb t-right"></div></div><svg class="chev"><use href="#dn"/></svg></div>
  </div>
  <footer class="estatus"><span class="count">100 élément(s)</span><span class="picked">1 élément sélectionné&nbsp; 238 octet(s)</span><span class="grow"></span><button class="on" aria-label="Détails"><svg class="i16"><use href="#vlist"/></svg></button><button aria-label="Grandes icônes"><svg class="i14"><use href="#vimg"/></svg></button></footer>
  <div class="taskbar with-tray"></div>
</section>
</main>
</body>
</html>
```
FILE: styles.css
```css
* { box-sizing: border-box; }
body { margin: 0; background: #fff; color: #000; font: 11px/14px "Open Sans", "Noto Sans", sans-serif; }
button, input { font: inherit; color: inherit; background: none; border: 0; padding: 0; margin: 0; }
h1, p, ol, ul { margin: 0; padding: 0; font-weight: normal; list-style: none; }
a { color: inherit; text-decoration: none; }
svg { flex: none; display: block; }
.sprite { position: absolute; width: 0; height: 0; }
.grow { flex: 1; }

.i7 { width: 7px; height: 7px; }
.i10 { width: 10px; height: 10px; }
.i11 { width: 11px; height: 11px; }
.i12 { width: 12px; height: 12px; }
.i13 { width: 13px; height: 13px; }
.i14 { width: 14px; height: 14px; }
.i16 { width: 16px; height: 16px; }
.i20 { width: 20px; height: 20px; }
.i30 { width: 30px; height: 30px; }
.i32 { width: 32px; height: 32px; }
.clip { width: 24px; height: 30px; }
.bigcopy { width: 28px; height: 30px; }
.selrect { width: 32px; height: 26px; }
.size { width: 32px; height: 28px; }
.caret { width: 5px; height: 3px; color: #222; }
.caret.flip { transform: rotate(180deg); color: #b5b5b5; }
.chev { width: 9px; height: 6px; color: #555; }
.chevh { width: 6px; height: 9px; color: #555; }
.uparr { width: 10px; height: 12px; }

.desktop { display: flex; height: 100vh; min-height: 880px; }
.screen { display: flex; flex-direction: column; min-width: 0; overflow: hidden; }
.screen-left { flex: 17 1 0; padding: 70px 0 62px; }
.screen-right { flex: 20 1 0; }

.titlebar { display: grid; grid-template-columns: 1fr auto 1fr; height: 23px; flex: none; background: #ebebeb; border-bottom: 1px solid #d5d5d5; }
.titlebar.blue { background: #64b1fd; border-bottom-color: #4f9be3; }
.titlebar h1 { font-size: 14px; line-height: 22px; color: #333; margin-left: 14px; }
.titlebar.blue h1 { color: #1c3c5c; margin-left: 0; }
.qat { display: flex; align-items: center; gap: 8px; }
.bar { width: 1px; height: 12px; background: #8b8b8b; margin: 0 2px 0 0; }
.winbtns { display: flex; justify-content: flex-end; align-items: flex-start; gap: 1px; }
.winbtns button { width: 25px; height: 19px; display: grid; place-items: center; }
.winbtns .x { width: 45px; background: #bcbcbc; margin: 0 3px 0 0; }
.blue .winbtns .x { background: #c75050; margin-right: 0; }

.tabs { display: flex; height: 24px; flex: none; border-bottom: 1px solid #dadbdc; background: #fff; color: #444; padding-right: 4px; }
.tabs button { padding: 0 14px; height: 23px; }
.tabs .file { width: 56px; padding: 0; background: #1979ca; color: #fff; }
.tabs .on { width: 64px; padding: 0; height: 24px; background: #f5f6f7; border: 1px solid #dadbdc; border-bottom: 0; }
.tabs .ico { padding: 0; width: 24px; display: grid; place-items: center; justify-items: end; }
.tabs .chev { color: #999; margin-right: 5px; }

.ribbon { display: flex; flex: none; height: 92px; padding: 2px 0 3px; background: #f5f6f7; border-bottom: 1px solid #dadbdc; color: #444; }
.group { display: flex; flex-direction: column; border-right: 1px solid #e2e3e4; flex: none; }
.group p { text-align: center; color: #929292; }
.body { display: flex; flex: 1; padding-top: 2px; align-items: flex-start; }
.w42 { width: 42px; } .w46 { width: 46px; } .w50 { width: 50px; } .w52 { width: 52px; } .w53 { width: 53px; } .w56 { width: 56px; }
.w60 { width: 60px; } .w61 { width: 61px; } .w68 { width: 68px; } .w80 { width: 80px; } .w119 { width: 119px; } .w138 { width: 138px; }
.w148 { width: 148px; } .w177 { width: 177px; } .w190 { width: 190px; } .w229 { width: 229px; } .w249 { width: 249px; } .w271 { width: 271px; } .w389 { width: 389px; }
.pad4 { padding-left: 4px; } .pad5 { padding-left: 5px; } .pad6 { padding-left: 6px; }
.big { line-height: 13px; text-align: center; flex: none; white-space: nowrap; display: block; border: 1px solid transparent; }
.big .pic { display: grid; place-items: center; height: 37px; margin-bottom: 1px; }
.big > .caret { margin: 4px auto 0; }
.big br ~ .caret { display: inline-block; margin: 0; vertical-align: middle; }
.big.sel { background: #c9e0f7; border-color: #62a2e4; }
.big.split { padding-bottom: 6px; }
.big.split .pic { border-bottom: 1px solid #62a2e4; }
.col { display: flex; flex-direction: column; align-items: flex-start; }
.sm { display: flex; align-items: center; gap: 3px; height: 22px; white-space: nowrap; }
.sm .caret { margin-left: 2px; }
button:disabled { color: #9a9a9a; }
button:disabled .caret { color: #b5b5b5; }
.vsep { width: 1px; height: 54px; background: #e2e3e4; margin: 5px 4px 0 5px; }
.tools { display: grid; grid-template-columns: repeat(3, 24px); grid-auto-rows: 28px; justify-content: center; padding-top: 8px; }
.tools button { display: grid; place-items: center; }
.tools .letter { font: bold 18px/20px "Liberation Serif", serif; color: #1c3d66; }
.c1 { width: 32px; height: 32px; background: #000; border: 1px solid #888; outline: 1px solid #fff; outline-offset: -2px; }
.c2 { width: 24px; height: 24px; background: #fff; border: 1px solid #888; }
.shapes { display: flex; width: 157px; height: 60px; margin-top: 3px; border: 1px solid #dadbdc; background: #fbfcfd; }
.shape-grid { display: grid; grid-template-columns: repeat(7, 20px); grid-auto-rows: 20px; }
.shape-grid svg { width: 18px; height: 16px; margin: 1px; fill: url(#gShape); stroke: #1d66ad; }
.shape-scroll { flex: 1; display: flex; flex-direction: column; align-items: center; justify-content: space-around; border-left: 1px solid #dadbdc; }
.palette { display: grid; grid-template-columns: repeat(10, 20px); grid-auto-rows: 20px; gap: 2px; margin: 1px 0 0 2px; }
.palette button { border: 1px solid #a0a0a0; background-clip: content-box; padding: 1px; box-shadow: inset 0 0 0 1px #fff; }
.palette button.none { box-shadow: none; }

.workspace { display: flex; flex: 1; min-height: 0; }
.canvas { flex: 1; min-width: 0; background: #fff; border-left: 5px solid #ccd7e8; border-bottom: 6px solid #b8c3d8; overflow: hidden; }
.picture { position: relative; padding-top: 4px; padding-bottom: 3px; }
.picture::after { content: ""; display: block; height: 1px; background: repeating-linear-gradient(90deg, #3c93e0 0 4px, #fff 4px 8px); margin-top: 4px; }
.cut-status { height: 15px; line-height: 15px; color: #1e395b; margin-left: -1px; }
.cut-status span { display: inline-block; width: 86px; border-right: 1px solid #eee; }
.handle { position: absolute; left: 605px; bottom: 1px; width: 5px; height: 5px; background: #fff; border: 1px solid #444; }
.tip { position: absolute; left: 278px; top: -7px; padding: 0 11px 1px 5px; line-height: 15px; background: #fff; border: 1px solid #767676; color: #575757; box-shadow: 3px 3px 3px rgba(0,0,0,.45); white-space: nowrap; }

.files { border-collapse: collapse; table-layout: fixed; }
.files td { height: 21px; padding: 0 7px; color: #6d6d6d; white-space: nowrap; }
.files td:first-child { color: #000; }
.files td:last-child { text-align: right; }
.files th { position: relative; height: 27px; padding: 0 7px; text-align: left; font-weight: normal; color: #4c607a; background: linear-gradient(#dfe7f2, #fff) right top / 1px 21px no-repeat; }
.name { display: flex; align-items: center; gap: 4px; }
.c-name-l { width: 287px; } .c-name-r { width: 292px; } .c-date, .c-type { width: 120px; } .c-size { width: 80px; }
#left-files td:first-child { padding-left: 14px; }
#right-files td:first-child, #right-files th:first-child { padding-left: 19px; }
.sort { position: absolute; left: 149px; top: 1px; width: 7px; height: 4px; transform: rotate(180deg); color: #6d9cc4; }

.vscroll { width: 16px; flex: none; background: #f0f0f0; display: flex; flex-direction: column; align-items: center; padding: 6px 0; gap: 5px; }
.vscroll .track { flex: 1; align-self: stretch; display: flex; flex-direction: column; }
.vscroll .thumb { background: #cdcdcd; width: 15px; }
.t-left { height: 62%; margin-top: auto; }
.t-right { height: 30%; margin-top: 184px; }
.hscroll { display: flex; align-items: center; height: 17px; flex: none; background: #f0f0f0; border-top: 1px solid #fff; padding: 0 19px 0 5px; gap: 6px; }
.hscroll .track { flex: 1; height: 15px; }
.hscroll .thumb { height: 15px; width: 83%; background: #cdcdcd; }

.pstatus { display: flex; height: 26px; flex: none; background: #f0f0f0; border-top: 1px solid #d5d5d5; padding: 1px 0; }
.cell { width: 156px; display: flex; align-items: center; gap: 6px; padding-left: 5px; border-right: 1px solid #d9d9d9; }
.cell.last { flex: 1; }
.zoom { width: 199px; display: flex; align-items: center; justify-content: flex-end; gap: 9px; padding-right: 3px; border-right: 1px solid #d9d9d9; }
.zoom label { margin-right: -2px; }
.zoom input { width: 87px; height: 18px; appearance: none; }
.zoom input::-webkit-slider-runnable-track { height: 4px; border: 1px solid #d0d2d2; background: #e7eaea; }
.zoom input::-webkit-slider-thumb { appearance: none; width: 10px; height: 15px; margin-top: -6px; background: #eee; border: 1px solid #9b9b9b; border-radius: 0 0 5px 5px; }

.navrow { display: flex; align-items: center; height: 37px; flex: none; padding: 0 15px 0 9px; gap: 9px; background: #fff; }
.navrow .pale .caret { width: 7px; height: 4px; color: #c9c9c9; }
.navrow .pale { margin: 0 4px 0 1px; }
.address { flex: 1; display: flex; align-items: center; height: 22px; border: 1px solid #d9d9d9; padding: 0 8px 0 2px; margin-right: 7px; gap: 12px; }
.address ol { display: flex; flex: 1; margin-left: -12px; }
.address li { display: flex; align-items: center; }
.address li::before { content: ""; border: 3px solid transparent; border-left: 4px solid #777; border-right: 0; margin: 0 10px; }
.address .chev { width: 8px; height: 5px; }
.search { display: flex; align-items: center; width: 198px; height: 22px; border: 1px solid #d9d9d9; padding: 0 5px 0 7px; }
.search input { flex: 1; min-width: 0; outline: 0; }
.search input::placeholder { color: #6d6d6d; opacity: 1; }

.explorer { display: flex; flex: 1; min-height: 0; border-top: 3px solid #f5f6f7; }
.tree { width: 189px; flex: none; border-right: 1px solid #f0f0f0; padding: 10px 1px 0; overflow: hidden; }
.tree > ul { margin-bottom: 21px; }
.tree a { display: flex; align-items: center; height: 21px; gap: 5px; padding-left: 18px; border: 1px solid transparent; }
.tree li li a { padding-left: 28px; }
.tree a.sel { background: #f7f7f7; border-color: #dedede; }
.listing { flex: 1; min-width: 0; overflow: hidden; }
.estatus { display: flex; align-items: center; height: 23px; flex: none; padding: 0 6px 0 14px; color: #1e395b; background: #fff; }
.estatus .count, .estatus .picked { border-right: 1px solid #eee; padding-right: 10px; margin-right: 10px; }
.estatus button { width: 22px; height: 23px; display: grid; place-items: center; }
.estatus .on { background: #cde8f6; border: 1px solid #26a0da; }

.taskbar { display: flex; height: 40px; flex: none; background: linear-gradient(90deg, #2a62ac, #255eac 50%, #2a68b6); border-top: 1px solid #1c4f96; }
.taskbar > button { display: grid; place-items: center; width: 58px; margin-right: 4px; border: 1px solid transparent; }
.taskbar > button svg { width: 32px; height: 32px; }
.taskbar > .start { width: 52px; margin: 0; }
.taskbar > .run { background: rgba(255,255,255,.2); border-color: rgba(255,255,255,.45); }
.taskbar > .many { border-right-width: 5px; border-right-style: double; padding-right: 0; }
.taskbar > .front { background: rgba(255,255,255,.45); border-color: rgba(255,255,255,.85); }
.tray { display: flex; align-items: center; gap: 8px; margin-left: auto; margin-right: 19px; color: #fff; }
.tray button { display: block; }
.tray time { text-align: center; line-height: 18px; margin-left: 10px; white-space: nowrap; }
```
FILE: app.js
```js
const icon = (id, cls = "i16") => `<svg class="${cls}"><use href="#${id}"/></svg>`;
const TYPES = { xl: "Modèle Microsoft ...", txt: "Document texte", doc: "Document Micros...", xls: "Feuille Microsoft E..." };
const D = "08/03/2013 14:40";

const leftFiles = [
  ["xl", "Codes Analytiques.xltx", "", "61"], ["xl", "Compte_Client.xltx", "", "28"], ["xl", "Conges.xltx", D, "113"],
  ["xl", "CRA.xltx", "14/03/2014 15:58", "26"], ["txt", "Creation_Mail.txt", D, "1"], ["txt", "CreationClient.txt", D, "1"],
  ["txt", "CreationConsultant.txt", "19/04/2013 16:21", "1"], ["txt", "CreationConsultantFutur.txt", "19/04/2013 16:24", "1"],
  ["txt", "CreationConsultantNetMakers.txt", "29/10/2014 14:07", "1"], ["xl", "cvae.xltx", "30/04/2013 09:16", "25"],
  ["txt", "Demande KM.Txt", D, "1"], ["txt", "Demande_Eval_Form.txt", D, "1"], ["txt", "Demande_RFM.txt", D, "1"],
  ["txt", "DemandeKM.Txt", "01/10/2014 08:59", "1"], ["xl", "demandes_facturation.xltx", D, "11"]
];
const rightFiles = [
  ["txt", "depart_consultant.txt", D, "1"], ["txt", "depart_consultant_futur.txt", D, "1"],
  ["xl", "droits_rh_ndf.xltx", "19/03/2014 09:58", "22"], ["xl", "Effectifs2010.xltx", "16/02/2015 09:33", "98"],
  ["xl", "EI.xltx", "28/03/2013 15:28", "62"], ["xl", "Enfants.xltx", "28/08/2013 13:24", "27"],
  ["xl", "EpiAffectations.xltx", "13/09/2013 09:37", "26"], ["xl", "EpiHistorique.xltx", "13/09/2013 09:39", "26"],
  ["xl", "Etranger.xltx", "13/09/2013 11:03", "25"], ["doc", "EvalForm (Consulting).doc", D, "164"],
  ["xls", "EvalForm (Consulting).xls", D, "1 576"], ["doc", "EvalForm (GdP).doc", D, "164"],
  ["xl", "Factures.xltx", "14/01/2015 16:37", "123"], ["xl", "Fiche de Renseignements.xltx", "28/07/2014 10:55", "33"],
  ["xl", "Formations.xltx", D, "202"], ["xl", "Formations_GIES.XLT", D, "343"], ["xl", "Formations_HSE.xltx", D, "120"],
  ["xl", "FormationsInitiales.xltx", "13/09/2013 11:08", "25"], ["xl", "formulaires de remises.xlt", D, "165"],
  ["xl", "Frais annexes par Agence.xltx", D, "96"], ["xl", "Frais generaux par Agence 2011.xltx", D, "354"],
  ["xl", "Frais generaux par Agence 2012.xltx", D, "351"], ["xl", "Frais generaux par Agence 2013.xltx", "30/07/2013 13:09", "356"],
  ["xl", "Frais generaux par Agence 2014.xltx", "30/07/2013 13:09", "356"], ["xl", "frais.xltx", "02/05/2013 09:24", "25"],
  ["xl", "Liste_Factures.xltx", D, "66"], ["txt", "Mail_Externe_Creation.txt", "29/10/2014 14:26", "1"],
  ["txt", "Mail_Externe_Suppression.txt", D, "1"], ["xl", "Marge par Agence Comparatif.xltx", D, "65"],
  ["xl", "Marge par Agence Recapitulatif OLD.xltx", D, "105"]
];
const rows = files => files.map(([k, n, d, s]) =>
  `<tr><td><span class="name">${icon(k)}${n}</span></td><td>${d}</td><td>${TYPES[k]}</td><td>${s} Ko</td></tr>`).join("");
document.querySelector("#left-files tbody").innerHTML = rows(leftFiles);
document.querySelector("#right-files tbody").innerHTML = rows(rightFiles);

const tree = [
  ["star", "Favoris", [["desk", "Bureau"], ["nas", "elipce (ELIPCE-NAS1)"], ["recent", "Emplacements récents"], ["down", "Téléchargements"], ["folder", "vivian_boulot"], ["folder", "LocalState"]]],
  ["cloud", "OneDrive", [["folder", "Documents"], ["folder", "Images"]]],
  ["pc", "Ce PC", [["fdesk", "Bureau"], ["fdoc", "Documents"], ["fimg", "Images"], ["fmus", "Musique"], ["down", "Téléchargements"], ["fvid", "Vidéos"], ["osdrive", "OS (C:)", true], ["drive", "Data (E:)"]]],
  ["lib", "Bibliothèques", [["ldoc", "Documents"], ["limg", "Images"], ["lmus", "Musique"], ["lvid", "Vidéos"], ["www", "www"]]],
  ["net", "Réseau", []]
];
const link = ([i, t, sel]) => `<a href="#"${sel === true ? ' class="sel"' : ""}>${icon(i)}${t}</a>`;
document.getElementById("tree").innerHTML = tree.map(([i, t, kids]) =>
  `<ul><li>${link([i, t])}<ul>${kids.map(k => `<li>${link(k)}</li>`).join("")}</ul></li></ul>`).join("");

document.getElementById("crumbs").innerHTML =
  ["Ce PC", "OS (C:)", "Program Files (x86)", "EasyPHP-DevServer-14.1VC11", "data", "localweb", "easy", "application", "document", "modeles"]
    .map(t => `<li><a href="#">${t}</a></li>`).join("");

document.getElementById("shapes").innerHTML = Array.from({ length: 21 }, (_, n) => icon("s" + n, "")).join("");

const colours = ["#000000", "#7f7f7f", "#880015", "#ed1c24", "#ff7f27", "#fff200", "#22b14c", "#00a2e8", "#3f48cc", "#a349a4",
  "#ffffff", "#c3c3c3", "#b97a57", "#ffaec9", "#ffc90e", "#efe4b0", "#b5e61d", "#99d9ea", "#7092be", "#c8bfe7"];
document.getElementById("palette").innerHTML = Array.from({ length: 30 }, (_, n) => colours[n]
  ? `<button aria-label="${colours[n]}" style="background-color:${colours[n]}"></button>`
  : `<button class="none" aria-label="Vide"></button>`).join("");

const apps = [["explorer", "run many front"], ["mysql"], ["ie"], ["vs"], ["outlook", "run many"], ["firefox", "run"], ["ps"],
  ["chrome"], ["lambda"], ["eclipse", "run"], ["spotify", "run"], ["rdp", "run"], ["paint", "run"]];
document.querySelectorAll(".taskbar").forEach(bar => {
  bar.innerHTML = `<button class="start" aria-label="Démarrer">${icon("t-win")}</button>` +
    apps.map(([a, c = ""]) => `<button class="${c}" aria-label="${a}">${icon("t-" + a)}</button>`).join("");
  if (bar.classList.contains("with-tray")) {
    bar.innerHTML += `<div class="tray">${Array.from({ length: 16 }, (_, n) => `<button aria-label="Notification ${n + 1}">${icon("y" + n)}</button>`).join("")}<time>14:49<br>31/03/2015</time></div>`;
  }
});
```
